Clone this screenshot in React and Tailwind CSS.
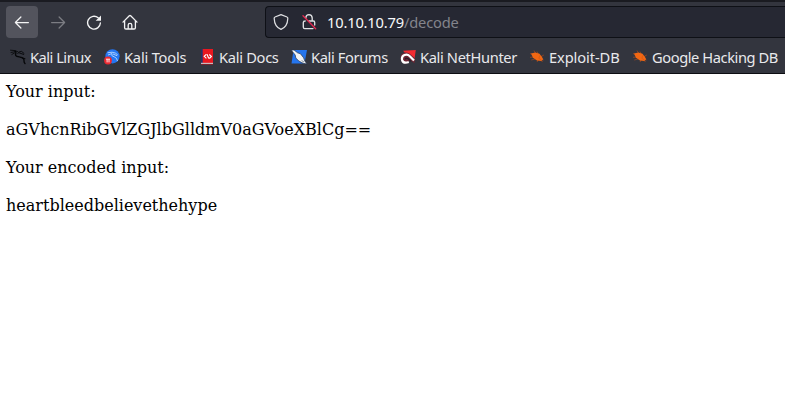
const DragonIcon = () => (
  <svg viewBox="0 0 16 16" className="size-4 shrink-0" fill="none" stroke="#050608" strokeLinecap="round">
    <path d="M.5 1.2 L5 1.6 L8 2.8 M1 3.5 L4.5 2.8 M1.8 5.5 L4.8 3.8" strokeWidth=".8" />
    <path d="M5 2.2 C7.5 3.4 4.6 5 5.8 6.6 C7.2 8.4 11.6 7.4 13.6 9.8 C14.8 11.5 13 12.6 15 14.6" strokeWidth="1.4" />
    <path d="M7.8 4.6 L9.2 2.9 L11.6 2.4 L14 4.4 M9.5 4 L13.6 5.4 M12.5 9 L15 9.6" strokeWidth=".9" />
  </svg>
);

const ToolsIcon = () => (
  <svg viewBox="0 0 16 16" className="size-4 shrink-0">
    <circle cx="8.5" cy="7.3" r="7.1" fill="#2476f3" />
    <path d="M3.5 3.8 L8 3.2 Q12 3.6 13.8 6 M4 6 L8 4.5 Q6.5 7 10.5 8 Q13 8.7 13.5 12 M9 5 L13 6.7" fill="none" stroke="#bad8ff" strokeWidth=".9" />
    <circle cx="4" cy="11.5" r="3.9" fill="#e92932" />
    <path d="M2 10.2 H6 M3.1 10.2 V13.4 M5 10.2 V13.4" fill="none" stroke="#ffe5e5" strokeWidth="1" />
  </svg>
);

const DocsIcon = () => (
  <svg viewBox="0 0 16 16" className="size-4 shrink-0">
    <path d="M2 0 H14 V16 H2 Z" fill="#e91820" />
    <path d="M2 0 H3.7 V14 H2 Z" fill="#25316a" />
    <path d="M2 13.8 H14 V15.3 H2 Z" fill="#c9b9bc" />
    <path d="M2 15 H14 V16 H2 Z" fill="#76232d" />
    <path d="M7.3 5.3 L5.2 7.3 L7.4 9.3 M8 5.3 L9.8 9.5 M10.3 5.5 L12.4 7.5 L10.3 9.5" fill="none" stroke="#fff" strokeWidth="1.1" />
  </svg>
);

const ForumsIcon = () => (
  <svg viewBox="0 0 16 16" className="size-4 shrink-0">
    <path d="M2.5 1 H16 L13.5 14.5 H.5 Z" fill="#2575ee" />
    <path d="M.3 1.2 L3 .9 L6.5 3.8 L9.5 4.8 L12.6 8.8 L13.8 12 L16 15 L12.2 14.3 L7.8 12 L4.8 9 L4.2 6 Z" fill="#f1f4f7" stroke="#25344a" strokeWidth=".7" />
    <path d="M10.6 11.5 L13 13" stroke="#52606e" strokeWidth=".7" />
  </svg>
);

const HunterIcon = () => (
  <svg viewBox="0 0 16 16" className="size-4 shrink-0">
    <path d="M3 1.8 L15.8 .9 L14.2 12 L9.5 9 Z" fill="#f32c32" />
    <path d="M1 6 Q4 2.3 9 4.2 L14.8 9.2 L14.6 14.2 L9.5 11 Q8 14.8 4.5 14.6 Q-1 12 1 6 Z" fill="#6c2634" />
    <path d="M8.8 13 Q3.5 14.8 2.2 11.5 Q1.1 7.5 4.5 6 Q7.5 4.7 9.6 7 L14 11.5" fill="none" stroke="#fff" strokeWidth="2.2" />
    <path d="M5.2 10.4 Q6 8.4 8 9.6 L11 12.4" fill="none" stroke="#251e28" strokeWidth="1.2" />
  </svg>
);

const BugIcon = () => (
  <svg viewBox="0 0 16 16" className="size-4 shrink-0">
    <path d="M1 4.5 L5 6 M5 1.5 L7 5 M8 2.5 L9.3 5.4 M1 8.3 L6 8 M2.3 11 L7 9.7 M12 7.6 L14.8 6 M12 10.5 L14.5 11 M8.7 11 L8.2 13 M11.8 11 L13.5 13" stroke="#ae4b1c" strokeWidth=".65" />
    <path d="M2 4.5 L6.3 3.4 L10.5 4.8 L12.8 7.7 L14.2 10.3 L12.3 12 L8 11.4 L4 8.7 Z" fill="#f26713" />
    <path d="M10.7 6.5 L9.9 9.5 L12.4 11" fill="none" stroke="#c9500d" strokeWidth=".5" />
  </svg>
);

const bookmarks = [
  ["Kali Linux", DragonIcon, "w-[94px] tracking-[-0.5px]"],
  ["Kali Tools", ToolsIcon, "w-[95px] tracking-[-0.2px]"],
  ["Kali Docs", DocsIcon, "w-[92px] tracking-[-0.3px]"],
  ["Kali Forums", ForumsIcon, "w-[109px] tracking-[-0.38px]"],
  ["Kali NetHunter", HunterIcon, "w-[129px] tracking-[-0.36px]"],
  ["Exploit-DB", BugIcon, "w-[103px] tracking-[-0.1px]"],
  ["Google Hacking DB", BugIcon, "w-[153px] tracking-[-0.42px]"],
];

export default function App() {
  return (
    <div className="h-[402px] w-[785px] overflow-hidden bg-white">
      <header className="flex h-[74px] flex-col border-t-2 border-b border-t-[#1a1b21] border-b-[#0c0d12] bg-[#33353e] font-['Noto_Sans',sans-serif]">
        <div className="flex h-10 shrink-0 items-center pl-1.5">
          <nav className="flex w-[259px] gap-1 text-[#f4f4f5]">
            <button aria-label="Back" className="flex size-8 items-center justify-center rounded bg-[#53545d]">
              <svg viewBox="0 0 16 16" className="size-4" fill="none" stroke="currentColor" strokeWidth="1.25" strokeLinecap="round" strokeLinejoin="round"><path d="M1.6 8.5 H14.4 M6.9 3 L1.4 8.5 L6.9 14" /></svg>
            </button>
            <button aria-label="Forward" className="flex size-8 items-center justify-center text-[#7c7d83]">
              <svg viewBox="0 0 16 16" className="size-4" fill="none" stroke="currentColor" strokeWidth="1.25" strokeLinecap="round" strokeLinejoin="round"><path d="M1.6 8.5 H14.4 M9.1 3 L14.6 8.5 L9.1 14" /></svg>
            </button>
            <button aria-label="Reload" className="flex size-8 items-center justify-center">
              <svg viewBox="0 0 16 16" className="size-4" fill="none" stroke="currentColor" strokeWidth="1.35" strokeLinecap="round"><path d="M12.2 3.8 A6.4 6.4 0 1 0 14.4 9" /><path d="M15 1.5 V6.8 H9.7 Z" fill="currentColor" stroke="none" /></svg>
            </button>
            <button aria-label="Home" className="flex size-8 items-center justify-center">
              <svg viewBox="0 0 16 16" className="size-4" fill="none" stroke="currentColor" strokeWidth="1.3" strokeLinecap="round" strokeLinejoin="round"><path d="M1 8.1 L7.3 1.8 Q8 1.2 8.7 1.8 L15 8.1 M2.6 6.8 V13.7 Q2.6 15 3.9 15 H12.1 Q13.4 15 13.4 13.7 V6.8 M6.2 14.9 V11 Q6.2 9.3 8 9.3 Q9.8 9.3 9.8 11 V14.9" /></svg>
            </button>
          </nav>
          <div className="flex h-8 flex-1 items-center rounded-l border border-r-0 border-[#0e1016] bg-[#262833] pl-[7px]">
            <svg viewBox="0 0 16 16" className="mr-3 size-4 shrink-0" fill="none" stroke="#dedfe2" strokeWidth="1.25" strokeLinejoin="round"><path d="M8 .7 L14 3 Q14.9 3.3 14.8 4.4 C14.6 10 12.6 13.5 8 15.3 C3.4 13.5 1.4 10 1.2 4.4 Q1.1 3.3 2 3 Z" /></svg>
            <svg viewBox="0 0 16 16" className="mr-2.5 size-4 shrink-0" fill="none" stroke="#dedfe2" strokeWidth="1.35" strokeLinecap="round"><path d="M4.8 4.2 Q5 .8 8 .7 Q11 .8 11.2 3.9 V6.8 M7.8 7 H12.4 Q13.7 7 13.7 8.4 V11 M4.2 7 Q2.3 7 2.3 8.4 V13 Q2.3 14.6 3.7 14.6 H12" /><path d="M2 1.8 L14.7 14.8" stroke="#e62850" /></svg>
            <p className="whitespace-pre text-[14.67px] leading-5 tracking-[-0.17px] text-[#f8f8fa]">10.10.10.79<span className="text-[#83848c]">/decode</span></p>
          </div>
        </div>
        <nav className="flex h-[30px] shrink-0 items-center pl-2.5 text-[#e9e9ec]">
          {bookmarks.map(([label, Icon, width]) => (
            <a key={label} className={"flex shrink-0 items-center gap-1 whitespace-nowrap text-[14.67px] leading-5 " + width}>
              <Icon />
              <span>{label}</span>
            </a>
          ))}
        </nav>
      </header>
      <main className="flex flex-col gap-[19px] pt-2 pl-1.5 font-['DejaVu_Serif',serif] text-base leading-[19px] text-black">
        <p>Your input:</p>
        <p>aGVhcnRibGVlZGJlbGlldmV0aGVoeXBlCg==</p>
        <p>Your encoded input:</p>
        <p>heartbleedbelievethehype</p>
      </main>
    </div>
  );
}
